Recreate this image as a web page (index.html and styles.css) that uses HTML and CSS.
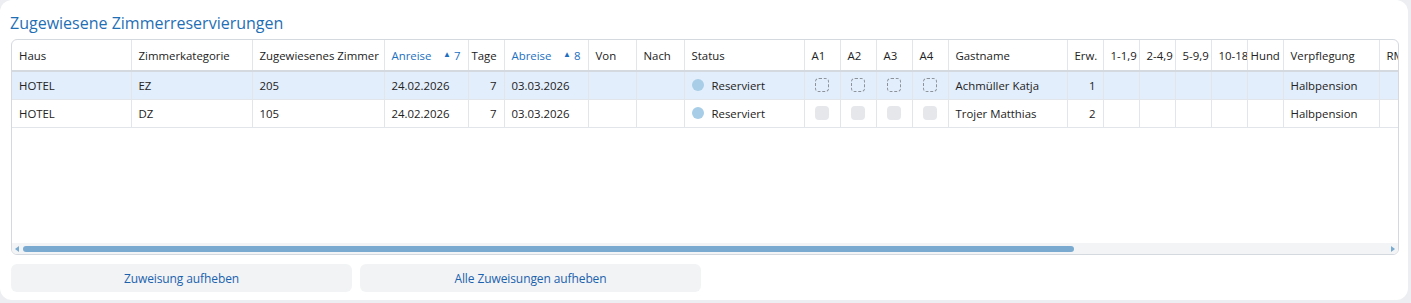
FILE: index.html
```html
<!DOCTYPE html>
<html lang="de">
<head>
    <meta charset="UTF-8">
    <title>Zugewiesene Zimmerreservierungen</title>
    <link rel="stylesheet" href="styles.css">
</head>
<body>
    <div class="panel">
        <h2 class="panel-title">Zugewiesene Zimmerreservierungen</h2>

        <div class="grid">
            <div class="grid-body">
                <table class="rooms">
                    <colgroup>
                        <col class="c-haus"><col class="c-kat"><col class="c-zimmer">
                        <col class="c-date"><col class="c-small"><col class="c-date">
                        <col class="c-mid"><col class="c-mid"><col class="c-status">
                        <col class="c-small"><col class="c-small"><col class="c-small"><col class="c-small">
                        <col class="c-gast"><col class="c-small">
                        <col class="c-small"><col class="c-small"><col class="c-small"><col class="c-small"><col class="c-small">
                        <col class="c-verpf"><col class="c-rm">
                    </colgroup>
                    <thead>
                        <tr>
                            <th>Haus</th>
                            <th>Zimmerkategorie</th>
                            <th>Zugewiesenes Zimmer</th>
                            <th class="sorted">Anreise<span class="sort"><span class="tri">&#9650;</span> 7</span></th>
                            <th class="tight">Tage</th>
                            <th class="sorted">Abreise<span class="sort"><span class="tri">&#9650;</span> 8</span></th>
                            <th>Von</th>
                            <th>Nach</th>
                            <th>Status</th>
                            <th>A1</th>
                            <th>A2</th>
                            <th>A3</th>
                            <th>A4</th>
                            <th>Gastname</th>
                            <th>Erw.</th>
                            <th>1-1,9</th>
                            <th>2-4,9</th>
                            <th>5-9,9</th>
                            <th>10-18</th>
                            <th class="tight">Hund</th>
                            <th>Verpflegung</th>
                            <th>RM</th>
                        </tr>
                    </thead>
                    <tbody>
                        <tr class="selected">
                            <td>HOTEL</td>
                            <td>EZ</td>
                            <td>205</td>
                            <td>24.02.2026</td>
                            <td class="num">7</td>
                            <td>03.03.2026</td>
                            <td></td>
                            <td></td>
                            <td><span class="status"><span class="dot"></span>Reserviert</span></td>
                            <td><span class="check empty"></span></td>
                            <td><span class="check empty"></span></td>
                            <td><span class="check empty"></span></td>
                            <td><span class="check empty"></span></td>
                            <td>Achmüller Katja</td>
                            <td class="num">1</td>
                            <td></td>
                            <td></td>
                            <td></td>
                            <td></td>
                            <td></td>
                            <td>Halbpension</td>
                            <td></td>
                        </tr>
                        <tr>
                            <td>HOTEL</td>
                            <td>DZ</td>
                            <td>105</td>
                            <td>24.02.2026</td>
                            <td class="num">7</td>
                            <td>03.03.2026</td>
                            <td></td>
                            <td></td>
                            <td><span class="status"><span class="dot"></span>Reserviert</span></td>
                            <td><span class="check off"></span></td>
                            <td><span class="check off"></span></td>
                            <td><span class="check off"></span></td>
                            <td><span class="check off"></span></td>
                            <td>Trojer Matthias</td>
                            <td class="num">2</td>
                            <td></td>
                            <td></td>
                            <td></td>
                            <td></td>
                            <td></td>
                            <td>Halbpension</td>
                            <td></td>
                        </tr>
                    </tbody>
                </table>
            </div>
            <div class="hscroll">
                <span class="arrow left"></span>
                <div class="track"><div class="thumb"></div></div>
                <span class="arrow right"></span>
            </div>
        </div>

        <div class="actions">
            <button class="action">Zuweisung aufheben</button>
            <button class="action">Alle Zuweisungen aufheben</button>
        </div>
    </div>
</body>
</html>
```

FILE: styles.css
```css
* {
    margin: 0;
    padding: 0;
    box-sizing: border-box;
}

body {
    font-family: 'Open Sans', 'Noto Sans', sans-serif;
    background-color: #eceef1;
    width: 1411px;
    height: 303px;
}

.panel {
    width: 1408px;
    height: 300px;
    background-color: #fff;
    border-radius: 12px;
    padding: 12px 9px 0 11px;
}

.panel-title {
    font-size: 16px;
    font-weight: 400;
    line-height: 22px;
    color: #1f6fb5;
    margin-left: -1px;
    margin-bottom: 5px;
}

.grid {
    width: 1388px;
    height: 216px;
    border: 1px solid #d4d9df;
    border-radius: 6px;
    display: flex;
    flex-direction: column;
    overflow: hidden;
}

.grid-body {
    flex: 1;
    overflow: hidden;
}

.rooms {
    table-layout: fixed;
    border-collapse: collapse;
    width: 1427px;
    font-size: 11.4px;
    color: #222;
}

.c-haus { width: 119px; }
.c-kat { width: 121px; }
.c-zimmer { width: 132px; }
.c-date { width: 84px; }
.c-small { width: 36px; }
.c-mid { width: 48px; }
.c-status { width: 120px; }
.c-gast { width: 119px; }
.c-verpf { width: 96px; }
.c-rm { width: 60px; }

.rooms th,
.rooms td {
    border-right: 1px solid #e2e5e9;
    padding: 0 7px;
    text-align: left;
    white-space: nowrap;
    overflow: hidden;
}

.rooms th {
    height: 31px;
    font-weight: 400;
    border-bottom: 2px solid #d4d9df;
}

.rooms th.tight {
    padding: 0 3px;
}

.rooms th.sorted {
    color: #1d6fc0;
}

.sort {
    float: right;
    font-size: 11.4px;
}

.tri {
    font-size: 8px;
    vertical-align: 3px;
}

.rooms td {
    height: 28px;
    border-bottom: 1px solid #e2e5e9;
}

.rooms td.num {
    text-align: right;
}

.rooms tr.selected td {
    background-color: #e2eefc;
}

.status {
    display: flex;
    align-items: center;
    gap: 8px;
}

.dot {
    width: 12px;
    height: 12px;
    border-radius: 50%;
    background-color: #a8cde6;
}

.check {
    display: block;
    width: 14px;
    height: 14px;
    border-radius: 4px;
    margin-left: 3px;
}

.check.empty {
    border: 1px dashed #8c929a;
}

.check.off {
    background-color: #e5e7eb;
}

.hscroll {
    height: 11px;
    background-color: #f3f4f6;
    display: flex;
    align-items: center;
    padding: 0 3px;
    gap: 4px;
}

.arrow {
    width: 0;
    height: 0;
    border-top: 3px solid transparent;
    border-bottom: 3px solid transparent;
}

.arrow.left {
    border-right: 4px solid #7aaad0;
}

.arrow.right {
    border-left: 4px solid #7aaad0;
}

.track {
    flex: 1;
    height: 6px;
}

.thumb {
    width: 1051px;
    height: 6px;
    border-radius: 3px;
    background-color: #7aaad0;
}

.actions {
    display: flex;
    gap: 8px;
    margin-top: 9px;
}

.action {
    width: 341px;
    height: 28px;
    border: none;
    border-radius: 6px;
    background-color: #f2f3f5;
    color: #1a62ad;
    font-family: 'Open Sans', sans-serif;
    font-size: 12px;
    letter-spacing: -0.1px;
    cursor: pointer;
}
```
